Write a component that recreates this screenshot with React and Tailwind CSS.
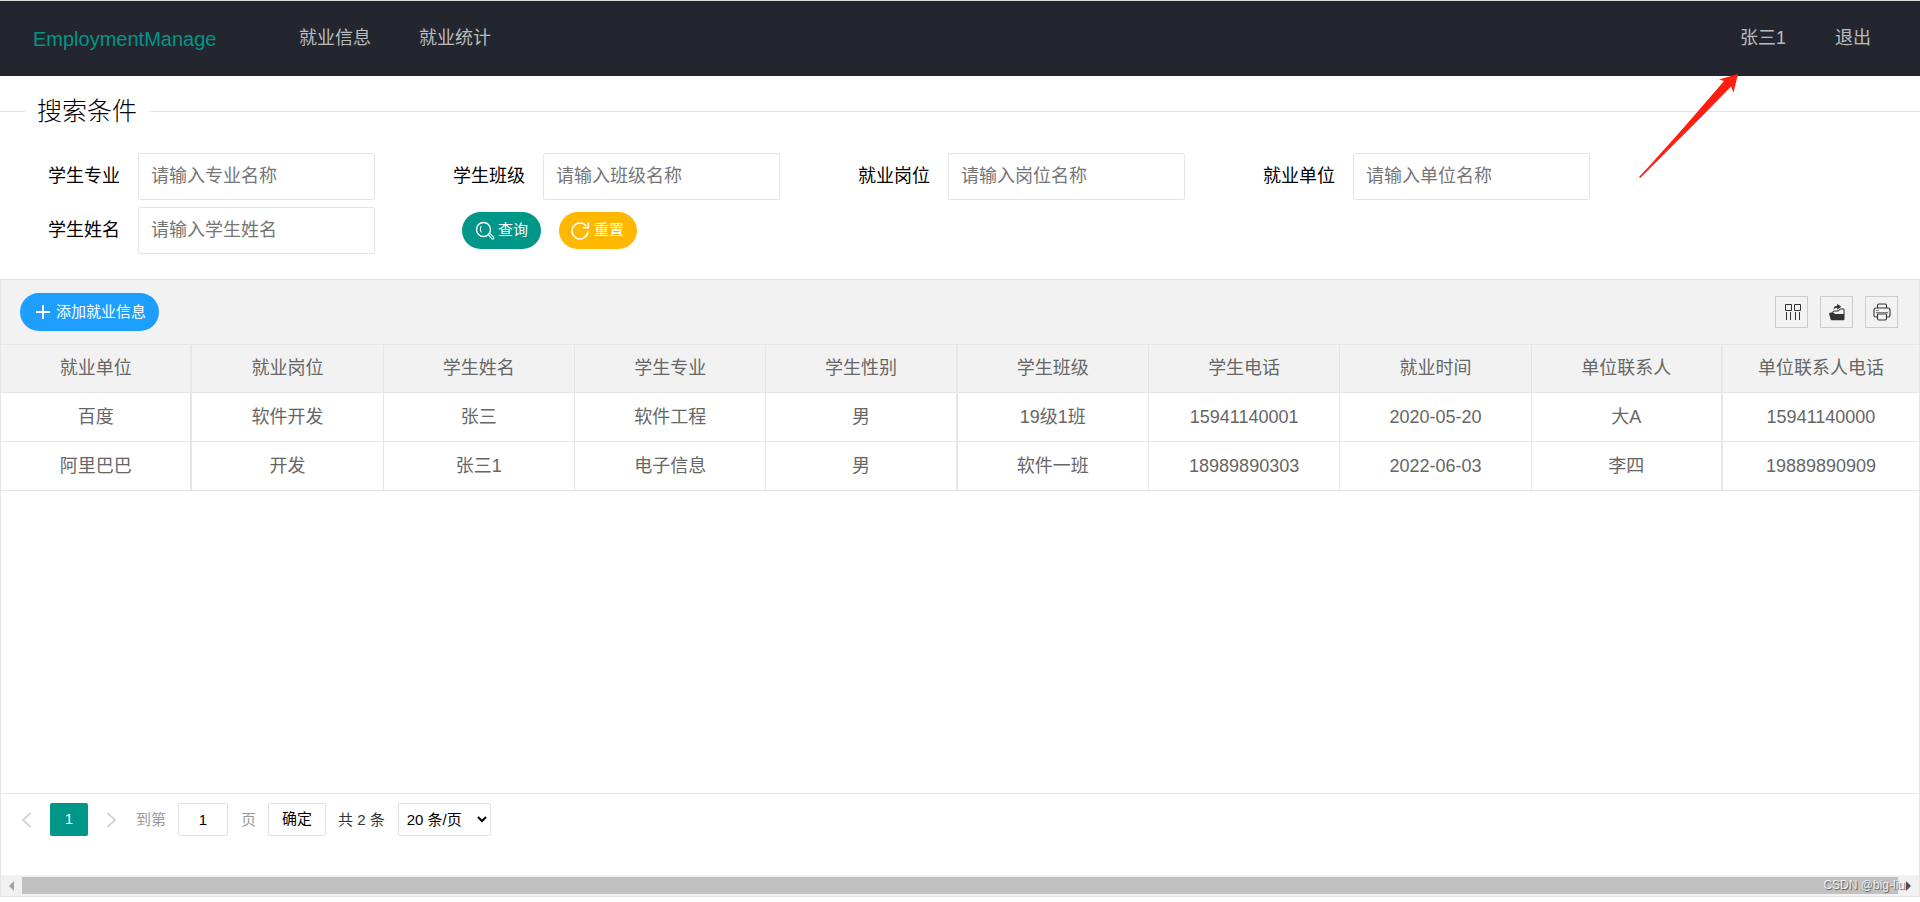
const fields = [
  { id: 'major', label: '学生专业', placeholder: '请输入专业名称' },
  { id: 'class', label: '学生班级', placeholder: '请输入班级名称' },
  { id: 'post', label: '就业岗位', placeholder: '请输入岗位名称' },
  { id: 'company', label: '就业单位', placeholder: '请输入单位名称' },
  { id: 'name', label: '学生姓名', placeholder: '请输入学生姓名' },
]

const columns = [
  '就业单位', '就业岗位', '学生姓名', '学生专业', '学生性别',
  '学生班级', '学生电话', '就业时间', '单位联系人', '单位联系人电话',
]

const rows = [
  ['百度', '软件开发', '张三', '软件工程', '男', '19级1班', '15941140001', '2020-05-20', '大A', '15941140000'],
  ['阿里巴巴', '开发', '张三1', '电子信息', '男', '软件一班', '18989890303', '2022-06-03', '李四', '19889890909'],
]

function SearchIcon() {
  return (
    <svg width="20" height="20" viewBox="0 0 20 20" fill="none" stroke="currentColor">
      <circle cx="8.5" cy="8.5" r="7" strokeWidth="1.4" />
      <path d="M6.500 5.200C5 6.600 5 10 6.500 11.400" strokeWidth="1.100" />
      <path d="M13.2 13.6l1.6-1.4 4 4.2c.6.8-.8 2.2-1.6 1.6z" strokeWidth="1.1" />
    </svg>
  )
}

function RefreshIcon() {
  return (
    <svg width="20" height="20" viewBox="0 0 20 20" fill="none" stroke="currentColor" strokeWidth="1.5">
      <path d="M17 10.400A8 8 0 1 1 15.600 5.400" />
      <path d="M17.400 1.200v5.600h-5.600" />
    </svg>
  )
}

function PlusIcon() {
  return (
    <svg width="20" height="20" viewBox="0 0 20 20" fill="none" stroke="currentColor" strokeWidth="2">
      <path d="M10 3v14M3 10h14" />
    </svg>
  )
}

function ColumnsIcon() {
  return (
    <svg width="18" height="18" viewBox="0 0 18 18" fill="none" stroke="currentColor" strokeWidth="1">
      <path d="M2.500 1.500h6v6h-6zM11.500 1.500h6v6h-6z" />
      <path d="M3.500 9v8M7.500 9v8M12.500 9v8M16.500 9v8" />
    </svg>
  )
}

function ExportIcon() {
  return (
    <svg width="18" height="18" viewBox="0 0 18 18" fill="none" stroke="currentColor" strokeWidth="1">
      <path d="M1 10.500l1.500-1h3l1.500 1.500h9.500v5q0 1.200-1.200 1.200H4q-1.200 0-1.500-1.200z" fill="currentColor" stroke="none" />
      <path d="M4 9.500l2-1.500h4.500L12 6h4v5.500" />
      <path d="M5.500 7C5.600 4 6.800 2.800 9.200 2.700V.8l4 3-4 3V4.800C7.400 4.800 6.400 5.500 5.500 7z" fill="currentColor" stroke="none" />
    </svg>
  )
}

function PrintIcon() {
  return (
    <svg width="18" height="18" viewBox="0 0 18 18" fill="none" stroke="currentColor" strokeWidth="1.1">
      <path d="M4.500 5V2.500q0-1.500 1.500-1.500h6q1.500 0 1.500 1.500V5" />
      <path d="M4 14H2.500q-1.500 0-1.500-1.500V7q0-2 2-2h12q2 0 2 2v5.500q0 1.500-1.500 1.500H14" />
      <path d="M4.500 11h9v4.500q0 1.500-1.500 1.500H6q-1.500 0-1.500-1.500z" />
      <path d="M3 7.500h3M3 9.500h12" strokeWidth=".6" />
    </svg>
  )
}

function Header() {
  return (
    <header className="flex h-[76px] items-center border-t border-[#d5e0dc] bg-[#23262e] text-[18px] text-white/70">
      <a href="#" className="ml-[33px] w-[266px] text-[20px] text-[#009688]">EmploymentManage</a>
      <nav className="flex gap-12">
        <a href="#">就业信息</a>
        <a href="#">就业统计</a>
      </nav>
      <nav className="mr-[49px] ml-auto flex gap-[49px]">
        <a href="#">张三1</a>
        <a href="#">退出</a>
      </nav>
    </header>
  )
}

function SearchForm() {
  return (
    <form>
      <fieldset className="mt-4 border-t border-[#e6e6e6]">
        <legend className="ml-[25px] px-[12px] text-[25px] leading-[38px] font-light">搜索条件</legend>
        <div className="grid grid-cols-[repeat(auto-fill,405px)] gap-y-[7px] pt-[23px] pb-[25px]">
          {fields.map((f) => (
            <div key={f.id} className="flex items-center">
              <label htmlFor={f.id} className="w-[138px] pr-[18px] text-right text-[18px]">{f.label}</label>
              <input
                id={f.id}
                type="text"
                placeholder={f.placeholder}
                className="h-[47px] w-[237px] rounded-xs border border-[#e6e6e6] px-[12px] text-[18px] placeholder:text-[#757575]"
              />
            </div>
          ))}
          <div className="flex items-center gap-[18px] pl-[57px] text-[15px] text-white">
            <button type="button" className="flex h-[37px] items-center gap-[3px] rounded-full bg-[#009688] px-[13px]">
              <SearchIcon />
              查询
            </button>
            <button type="button" className="flex h-[37px] items-center gap-[3px] rounded-full bg-[#ffb800] pr-[13px] pl-[12px]">
              <RefreshIcon />
              重置
            </button>
          </div>
        </div>
      </fieldset>
    </form>
  )
}

function Toolbar() {
  const tool = 'flex h-[32px] w-[33px] items-center justify-center border border-[#ccc] text-[#333]'
  return (
    <div className="flex h-[65px] items-center justify-between border-b border-[#e6e6e6] bg-[#f2f2f2] pr-[21px] pl-[19px]">
      <button type="button" className="flex h-[38px] items-center gap-[3px] rounded-full bg-[#1e9fff] px-[13px] text-[15px] text-white">
        <PlusIcon />
        添加就业信息
      </button>
      <div className="flex gap-3">
        <button type="button" aria-label="筛选列" className={tool}><ColumnsIcon /></button>
        <button type="button" aria-label="导出" className={tool}><ExportIcon /></button>
        <button type="button" aria-label="打印" className={tool}><PrintIcon /></button>
      </div>
    </div>
  )
}

function DataTable() {
  return (
    <table className="w-full table-fixed border-separate border-spacing-0 text-center text-[18px] text-[#666]">
      <thead className="bg-[#f2f2f2]">
        <tr>
          {columns.map((c) => (
            <th key={c} className="h-12 border-r border-b border-[#e6e6e6] font-normal nth-[4n+1]:border-r-2 last:w-[196px] last:border-r-0">{c}</th>
          ))}
        </tr>
      </thead>
      <tbody>
        {rows.map((row) => (
          <tr key={row[0]}>
            {row.map((cell, i) => (
              <td key={i} className="h-[49px] border-r border-b border-[#e6e6e6] nth-[4n+1]:border-r-2 last:border-r-0">{cell}</td>
            ))}
          </tr>
        ))}
      </tbody>
    </table>
  )
}

function Pagination() {
  return (
    <div className="flex h-[82px] items-start border-t border-[#e6e6e6] pt-[9px] pl-[19px] text-[15px] text-[#333]">
      <button type="button" aria-label="上一页" className="flex h-[33px] items-center text-[#d2d2d2]">
        <svg width="12" height="18" viewBox="0 0 12 18" fill="none" stroke="currentColor" strokeWidth="1.8">
          <path d="M10.500 2L3 9l7.500 7" />
        </svg>
      </button>
      <button type="button" className="ml-[18px] h-[33px] w-[38px] rounded-xs bg-[#009688] text-white">1</button>
      <button type="button" aria-label="下一页" className="ml-[18px] flex h-[33px] items-center text-[#d2d2d2]">
        <svg width="12" height="18" viewBox="0 0 12 18" fill="none" stroke="currentColor" strokeWidth="1.8">
          <path d="M1.500 2L9 9l-7.500 7" />
        </svg>
      </button>
      <label htmlFor="page" className="ml-[18px] leading-[33px] text-[#999]">到第</label>
      <input id="page" type="text" defaultValue="1" className="ml-[12px] h-[33px] w-[50px] rounded-xs border border-[#e2e2e2] text-center text-black" />
      <span className="ml-[13px] leading-[33px] text-[#999]">页</span>
      <button type="button" className="ml-[12px] h-[33px] w-[58px] rounded-xs border border-[#e2e2e2] text-black">确定</button>
      <span className="ml-[12px] leading-[33px]">共 2 条</span>
      <select aria-label="每页条数" className="ml-[13px] h-[33px] w-[93px] rounded-xs border border-[#e2e2e2] pl-[4px] text-black">
        <option>20 条/页</option>
      </select>
    </div>
  )
}

function ScrollBar() {
  return (
    <div className="relative flex h-[21px] items-center bg-[#f1f1f1]">
      <svg className="ml-[8px]" width="5" height="10" viewBox="0 0 5 10" fill="#a3a3a3">
        <path d="M5 0v10L0 5z" />
      </svg>
      <div className="mx-[8px] h-[17px] flex-1 bg-[#c1c1c1]" />
      <svg className="mr-[8px]" width="5" height="10" viewBox="0 0 5 10" fill="#505050">
        <path d="M0 0v10l5-5z" />
      </svg>
      <span className="absolute top-[2px] right-[14px] text-[12px] leading-4 text-white/80 [text-shadow:1px_1px_1px_#555]">
        CSDN @big-liu
      </span>
    </div>
  )
}

export default function App() {
  return (
    <div className="relative flex min-h-screen flex-col bg-white pb-[5px] font-['Liberation_Sans','Noto_Sans_CJK_SC',sans-serif] text-black">
      <Header />
      <SearchForm />
      <main className="flex flex-1 flex-col border border-[#e6e6e6]">
        <Toolbar />
        <div className="flex-1">
          <DataTable />
        </div>
        <Pagination />
        <ScrollBar />
      </main>

      {/* Arrow pointing at the signed-in user */}
      <svg className="pointer-events-none absolute top-[74px] right-[182px]" width="99" height="105" viewBox="0 0 99 105" fill="#ff1e10">
        <path d="M99 0L80 5.500l5 1.500C60 36 30 71 0 103l1.200 1C31 74 62 44 92 12.500l2.500 6z" />
      </svg>
    </div>
  )
}
